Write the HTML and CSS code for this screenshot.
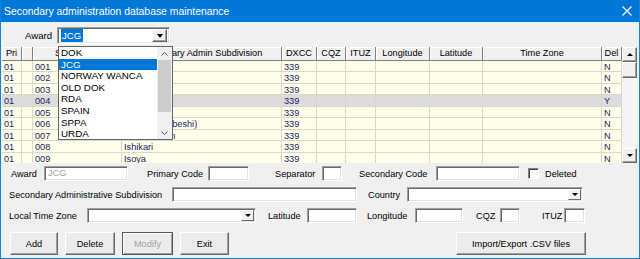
FILE: index.html
```html
<!DOCTYPE html>
<html lang="en">
<head>
    <meta charset="UTF-8">
    <title>Secondary administration database maintenance</title>
    <link rel="stylesheet" href="styles.css">
</head>
<body>

<div class="window">
    <div class="titlebar">
        <span class="title">Secondary administration database maintenance</span>
        <svg class="close" width="10" height="10" viewBox="0 0 10 10">
            <path d="M0.5 0.5L9.5 9.5M9.5 0.5L0.5 9.5" stroke="#fff" stroke-width="1.1" fill="none"/>
        </svg>
    </div>

    <div class="award-bar">
        <span class="award-label">Award</span>
        <div class="combo combo-award">
            <span class="combo-text"><span class="sel-text">JCG</span></span>
            <span class="combo-btn"><i class="tri"></i></span>

            <!-- open drop-down list of the award combo -->
            <div class="droplist">
                <ul class="drop-items">
                    <li>DOK</li>
                    <li class="active">JCG</li>
                    <li>NORWAY WANCA</li>
                    <li>OLD DOK</li>
                    <li>RDA</li>
                    <li>SPAIN</li>
                    <li>SPPA</li>
                    <li>URDA</li>
                </ul>
                <div class="drop-scroll">
                    <span class="chev"><svg width="7" height="4" viewBox="0 0 7 4"><polyline points="0.5,3.5 3.5,0.5 6.5,3.5" fill="none" stroke="#555" stroke-width="1"/></svg></span>
                    <span class="drop-thumb"></span>
                    <span class="drop-track"></span>
                    <span class="chev"><svg width="7" height="4" viewBox="0 0 7 4"><polyline points="0.5,0.5 3.5,3.5 6.5,0.5" fill="none" stroke="#555" stroke-width="1"/></svg></span>
                </div>
            </div>
        </div>
    </div>

    <div class="grid">
        <div class="grid-body">
            <div class="grid-row head">
                <span>Pri</span><span></span><span>Secondary</span><span>Secondary Admin Subdivision</span>
                <span>DXCC</span><span>CQZ</span><span>ITUZ</span><span>Longitude</span><span>Latitude</span>
                <span>Time Zone</span><span>Del</span>
            </div>
            <div class="grid-row">
                <span>01</span><span></span><span>001</span><span></span><span>339</span>
                <span></span><span></span><span></span><span></span><span></span><span>N</span>
            </div>
            <div class="grid-row">
                <span>01</span><span></span><span>002</span><span></span><span>339</span>
                <span></span><span></span><span></span><span></span><span></span><span>N</span>
            </div>
            <div class="grid-row">
                <span>01</span><span></span><span>003</span><span></span><span>339</span>
                <span></span><span></span><span></span><span></span><span></span><span>N</span>
            </div>
            <div class="grid-row selected">
                <span>01</span><span></span><span>004</span><span></span><span>339</span>
                <span></span><span></span><span></span><span></span><span></span><span>Y</span>
            </div>
            <div class="grid-row">
                <span>01</span><span></span><span>005</span><span></span><span>339</span>
                <span></span><span></span><span></span><span></span><span></span><span>N</span>
            </div>
            <div class="grid-row">
                <span>01</span><span></span><span>006</span><span>Yoichi (Shiribeshi)</span><span>339</span>
                <span></span><span></span><span></span><span></span><span></span><span>N</span>
            </div>
            <div class="grid-row">
                <span>01</span><span></span><span>007</span><span>Kyowa Town</span><span>339</span>
                <span></span><span></span><span></span><span></span><span></span><span>N</span>
            </div>
            <div class="grid-row">
                <span>01</span><span></span><span>008</span><span>Ishikari</span><span>339</span>
                <span></span><span></span><span></span><span></span><span></span><span>N</span>
            </div>
            <div class="grid-row">
                <span>01</span><span></span><span>009</span><span>Isoya</span><span>339</span>
                <span></span><span></span><span></span><span></span><span></span><span>N</span>
            </div>
        </div>
        <div class="vscroll">
            <span class="sb-btn"><i class="tri-up"></i></span>
            <span class="sb-thumb"></span>
            <span class="sb-track"></span>
            <span class="sb-btn"><i class="tri-down"></i></span>
        </div>
    </div>

    <div class="form">
        <div class="frow">
            <span class="lbl l-award">Award</span>
            <span class="in i-award">JCG</span>
            <span class="lbl l-primary">Primary Code</span>
            <span class="in i-primary"></span>
            <span class="lbl l-sep">Separator</span>
            <span class="in i-sep"></span>
            <span class="lbl l-seccode">Secondary Code</span>
            <span class="in i-seccode"></span>
            <span class="check"></span>
            <span class="lbl l-deleted">Deleted</span>
        </div>
        <div class="frow">
            <span class="lbl l-subdiv">Secondary Administrative Subdivision</span>
            <span class="in i-subdiv"></span>
            <span class="lbl l-country">Country</span>
            <span class="in small-combo i-country"><span class="small-btn"><i class="tri-down"></i></span></span>
        </div>
        <div class="frow">
            <span class="lbl l-tz">Local Time Zone</span>
            <span class="in small-combo i-tz"><span class="small-btn"><i class="tri-down"></i></span></span>
            <span class="lbl l-lat">Latitude</span>
            <span class="in i-lat"></span>
            <span class="lbl l-lon">Longitude</span>
            <span class="in i-lon"></span>
            <span class="lbl l-cqz">CQZ</span>
            <span class="in i-cqz"></span>
            <span class="lbl l-ituz">ITUZ</span>
            <span class="in i-ituz"></span>
        </div>
        <div class="frow buttons">
            <button class="btn b-add">Add</button>
            <button class="btn b-delete">Delete</button>
            <button class="btn b-modify">Modify</button>
            <button class="btn b-exit">Exit</button>
            <button class="btn b-import">Import/Export .CSV files</button>
        </div>
    </div>
</div>

</body>
</html>
```

FILE: styles.css
```css
body {
    margin: 0;
    background: #fff;
}

.window {
    width: 640px;
    height: 259px;
    box-sizing: border-box;
    border: 1px solid #1a80d6;
    border-top: none;
    background-color: #f0f0f0;
    font-family: "Liberation Sans", Arial, sans-serif;
    font-size: 9.2px;
    color: #000;
    overflow: hidden;
}

/* title bar */
.titlebar {
    height: 22px;
    background-color: #0078d7;
    color: #fff;
    display: flex;
    align-items: center;
    padding-left: 3px;
}

.title {
    font-size: 10.4px;
}

.close {
    margin-left: auto;
    margin-right: 7px;
}

/* award selector */
.award-bar {
    display: flex;
    align-items: center;
    margin-top: 5px;
    height: 17px;
}

.award-label {
    margin-left: 24px;
    width: 32px;
    font-size: 9.6px;
}

.combo {
    position: relative;
    box-sizing: border-box;
    background: #fff;
    border: 1px solid;
    border-color: #a0a0a0 #fff #fff #a0a0a0;
    box-shadow: inset 1px 1px 0 #696969, inset -1px -1px 0 #e3e3e3;
}

.combo-award {
    width: 113px;
    height: 17px;
    display: flex;
    align-items: center;
    padding: 2px;
}

.combo-text {
    flex: 1;
    font-size: 9.6px;
    padding-left: 1px;
}

.sel-text {
    background-color: #0078d7;
    color: #fff;
    padding: 1px 2px 1px 1px;
}

.combo-btn {
    width: 15px;
    height: 13px;
    box-sizing: border-box;
    background: #f0f0f0;
    border: 1px solid;
    border-color: #fff #696969 #696969 #fff;
    box-shadow: inset -1px -1px 0 #a0a0a0;
    display: flex;
    align-items: center;
    justify-content: center;
}

.tri {
    width: 0;
    height: 0;
    border-left: 3.5px solid transparent;
    border-right: 3.5px solid transparent;
    border-top: 4px solid #000;
}

.droplist {
    position: absolute;
    left: 0;
    top: 18px;
    width: 115px;
    height: 94px;
    box-sizing: border-box;
    background: #fff;
    border: 1px solid #646464;
    display: flex;
    z-index: 5;
}

.drop-items {
    list-style: none;
    margin: 0;
    padding: 0;
    flex: 1;
    font-size: 9.8px;
}

.drop-items li {
    height: 11.6px;
    line-height: 11.6px;
    padding-left: 2px;
}

.drop-items li.active {
    background-color: #0078d7;
    color: #fff;
}

.drop-scroll {
    width: 15px;
    background: #f0f0f0;
    display: flex;
    flex-direction: column;
}

.chev {
    height: 13px;
    display: flex;
    align-items: center;
    justify-content: center;
}

.drop-thumb {
    height: 52px;
    margin: 0 1px;
    background: #cdcdcd;
}

.drop-track {
    flex: 1;
}

/* data grid */
.grid {
    display: flex;
    margin-top: 3px;
    margin-left: 1px;
    width: 635px;
    height: 116px;
    overflow: hidden;
}

.grid-body {
    width: 620px;
    background: #ffffea;
}

.grid-row {
    display: grid;
    grid-template-columns: 20px 11px 89px 160px 35px 29px 30px 54px 53px 119px 20px;
    height: 11.45px;
    box-sizing: border-box;
    border-bottom: 1px solid #d8d8cc;
    color: #1c1c64;
    line-height: 12px;
}

.grid-row span {
    box-sizing: border-box;
    border-right: 1px solid #d8d8cc;
    padding-left: 2px;
    white-space: nowrap;
    overflow: hidden;
}

.grid-row.head {
    height: 14px;
    line-height: 13px;
    background: #f0f0f0;
    color: #000;
    border-bottom: none;
}

.grid-row.head span {
    text-align: center;
    padding-left: 0;
    border-right: 1px solid #808080;
    border-bottom: 1px solid #808080;
    box-shadow: inset 1px 1px 0 #fff;
}

.grid-row.selected {
    background: #dcdcdc;
}

.vscroll {
    width: 15px;
    background: #f5f5f5;
    display: flex;
    flex-direction: column;
}

.sb-btn,
.sb-thumb {
    box-sizing: border-box;
    background: #f0f0f0;
    border: 1px solid;
    border-color: #fff #696969 #696969 #fff;
    box-shadow: inset -1px -1px 0 #a0a0a0;
}

.sb-btn {
    height: 15px;
    display: flex;
    align-items: center;
    justify-content: center;
}

.sb-thumb {
    height: 16px;
}

.sb-track {
    flex: 1;
}

.tri-up,
.tri-down {
    width: 0;
    height: 0;
    border-left: 3px solid transparent;
    border-right: 3px solid transparent;
}

.tri-up {
    border-bottom: 3px solid #000;
}

.tri-down {
    border-top: 3px solid #000;
}

/* edit form */
.form {
    margin-top: 3px;
}

.frow {
    display: flex;
    align-items: center;
    height: 15px;
    margin-top: 6px;
}

.frow:first-child {
    margin-top: 0;
}

.lbl {
    flex: none;
    white-space: nowrap;
}

.in {
    flex: none;
    height: 15px;
    box-sizing: border-box;
    background: #fff;
    border: 1px solid;
    border-color: #a0a0a0 #fff #fff #a0a0a0;
    box-shadow: inset 1px 1px 0 #696969, inset -1px -1px 0 #e3e3e3;
    padding-left: 3px;
    line-height: 13px;
}

.small-combo {
    display: flex;
    justify-content: flex-end;
    align-items: center;
    padding: 1px;
}

.small-btn {
    width: 13px;
    height: 11px;
    box-sizing: border-box;
    background: #f0f0f0;
    border: 1px solid;
    border-color: #fff #696969 #696969 #fff;
    display: flex;
    align-items: center;
    justify-content: center;
}

.check {
    flex: none;
    width: 11px;
    height: 11px;
    box-sizing: border-box;
    margin-left: 8px;
    background: #fff;
    border: 1px solid;
    border-color: #808080 #fff #fff #808080;
    box-shadow: inset 1px 1px 0 #404040;
}

.l-award { margin-left: 10px; width: 33px; }
.i-award { width: 84px; color: #a0a0a0; }
.l-primary { margin-left: 19px; width: 61px; }
.i-primary { width: 41px; }
.l-sep { margin-left: 26px; width: 47px; }
.i-sep { width: 20px; }
.l-seccode { margin-left: 17px; width: 77px; }
.i-seccode { width: 84px; }
.l-deleted { margin-left: 6px; }

.l-subdiv { margin-left: 8px; width: 163px; }
.i-subdiv { width: 185px; }
.l-country { margin-left: 11px; width: 39px; }
.i-country { width: 176px; }

.l-tz { margin-left: 8px; width: 78px; }
.i-tz { width: 169px; }
.l-lat { margin-left: 12px; width: 39px; }
.i-lat { width: 50px; }
.l-lon { margin-left: 10px; width: 48px; }
.i-lon { width: 48px; }
.l-cqz { margin-left: 13px; width: 24px; }
.i-cqz { width: 20px; }
.l-ituz { margin-left: 22px; width: 22px; }
.i-ituz { width: 21px; }

/* buttons */
.frow.buttons {
    height: 23px;
    margin-top: 9px;
}

.btn {
    flex: none;
    height: 23px;
    box-sizing: border-box;
    padding: 0;
    margin-left: 7px;
    font-family: "Liberation Sans", Arial, sans-serif;
    font-size: 9.2px;
    color: #000;
    background: #ececec;
    border: 1px solid;
    border-color: #fff #696969 #696969 #fff;
    box-shadow: inset -1px -1px 0 #a0a0a0;
}

.btn.b-modify {
    color: #a0a0a0;
    border-color: #555;
    box-shadow: inset 1px 1px 0 #fff, inset -1px -1px 0 #a0a0a0;
}

.b-add { margin-left: 9px; width: 48px; }
.b-delete { width: 50px; }
.b-modify { width: 51px; }
.b-exit { width: 49px; }
.b-import { margin-left: 227px; width: 130px; }
```
